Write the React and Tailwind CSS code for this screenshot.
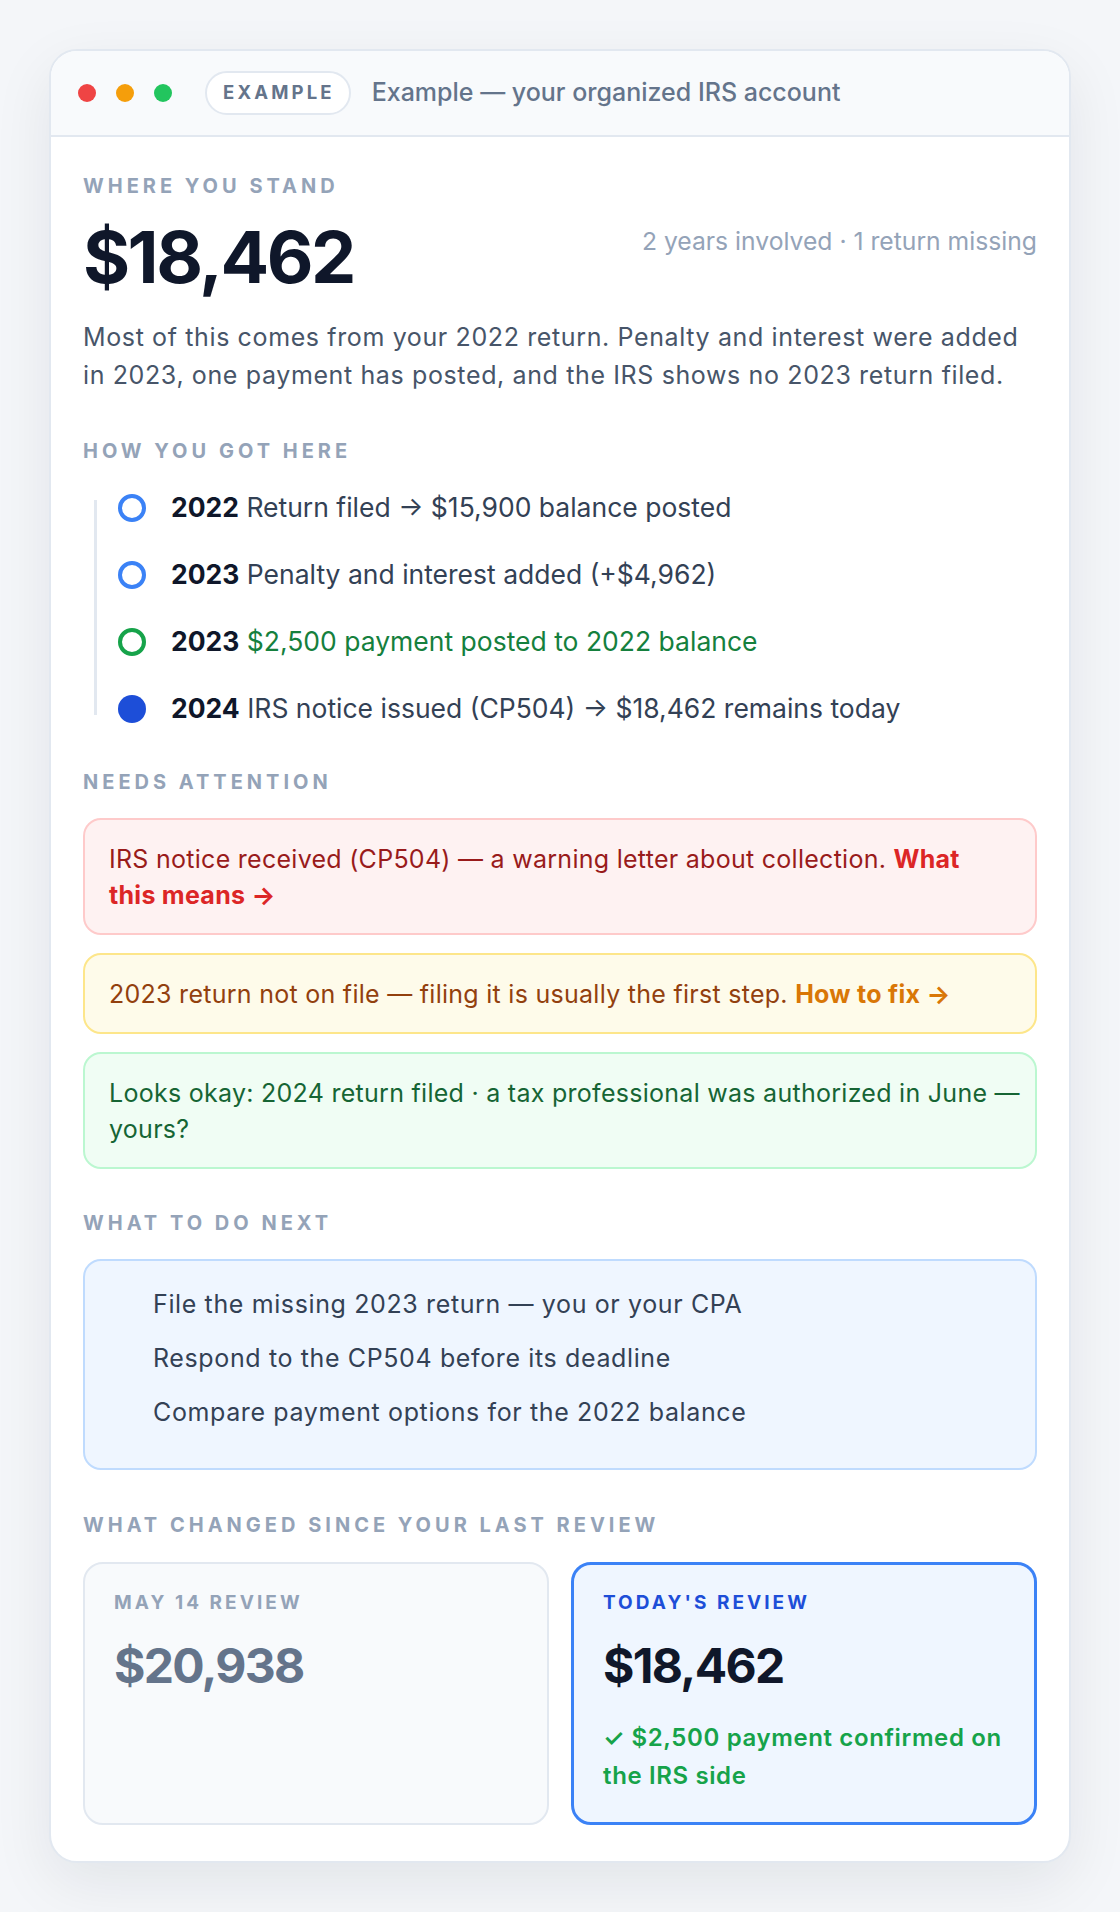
import React from "react";

const timeline = [
  { year: "2022", text: "Return filed → $15,900 balance posted", dot: "border-[4px] border-[#3b82f6]", tone: "text-[#334155]" },
  { year: "2023", text: "Penalty and interest added (+$4,962)", dot: "border-[4px] border-[#3b82f6]", tone: "text-[#334155]" },
  { year: "2023", text: "$2,500 payment posted to 2022 balance", dot: "border-[4px] border-[#16a34a]", tone: "text-[#15803d]" },
  { year: "2024", text: "IRS notice issued (CP504) → $18,462 remains today", dot: "bg-[#1d4ed8]", tone: "text-[#334155]" },
];

const nextSteps = [
  "File the missing 2023 return — you or your CPA",
  "Respond to the CP504 before its deadline",
  "Compare payment options for the 2022 balance",
];

// small uppercase section heading
function Label({ children, className = "" }) {
  return (
    <div className={`text-[20px] leading-[28px] font-bold uppercase tracking-[0.2em] text-[#94a3b8] ${className}`}>
      {children}
    </div>
  );
}

// label used inside the review cards
function CardLabel({ children, color }) {
  return (
    <div className={`text-[19px] leading-[28px] font-bold uppercase tracking-[0.16em] ${color}`}>
      {children}
    </div>
  );
}

export default function App() {
  return (
    <div
      className="min-h-screen bg-[#f4f6f9] px-[49px] pt-[49px] pb-[50px]"
      style={{ fontFamily: "Inter, 'Noto Sans', sans-serif" }}
    >
      <div className="rounded-[28px] border-2 border-[#e2e8f0] bg-white shadow-[0_20px_60px_rgba(15,23,42,0.08)] overflow-hidden">
        {/* window bar */}
        <div className="flex items-center h-[86px] px-[27px] bg-[#f8fafc] border-b-2 border-[#e2e8f0]">
          <div className="flex items-center gap-5">
            <span className="w-[18px] h-[18px] rounded-full bg-[#ef4444]" />
            <span className="w-[18px] h-[18px] rounded-full bg-[#f59e0b]" />
            <span className="w-[18px] h-[18px] rounded-full bg-[#22c55e]" />
          </div>
          <span className="ml-[33px] flex items-center h-[44px] pl-[16px] pr-[14px] rounded-full bg-white border-2 border-[#e2e8f0] text-[18.5px] font-bold tracking-[0.17em] text-[#64748b]">
            EXAMPLE
          </span>
          <span className="ml-[21px] text-[25px] font-medium text-[#64748b]">
            Example — your organized IRS account
          </span>
        </div>

        <div className="px-[32px] pt-[35px] pb-[36px]">
          {/* where you stand */}
          <div className="flex justify-between items-start">
            <div>
              <Label>Where you stand</Label>
              <div className="mt-[21px] text-[72px] leading-[72px] font-bold tracking-[-0.035em] text-[#0f172a]">$18,462</div>
            </div>
            <div className="mt-[53px] text-[24.7px] leading-[32px] text-[#94a3b8]">2 years involved · 1 return missing</div>
          </div>
          <p className="mt-[25px] text-[25px] leading-[38px] tracking-[0.025em] text-[#475569]">
            Most of this comes from your 2022 return. Penalty and interest were added in 2023, one payment has posted, and the IRS shows no 2023 return filed.
          </p>

          {/* timeline */}
          <Label className="mt-[43px]">How you got here</Label>
          <div className="relative mt-[23px]">
            <div className="absolute left-[11px] top-[12px] bottom-[14px] w-[3px] bg-[#e2e8f0]" />
            <div className="flex flex-col gap-[27px] pl-[35px]">
              {timeline.map((t, i) => (
                <div key={i} className="flex items-center h-[40px] gap-[25px]">
                  <span className={`w-[28px] h-[28px] rounded-full shrink-0 ${t.dot}`} />
                  <span className={`text-[26.5px] ${t.tone}`}>
                    <b className="font-bold text-[#0f172a]">{t.year}</b> {t.text}
                  </span>
                </div>
              ))}
            </div>
          </div>

          {/* needs attention */}
          <Label className="mt-[39px]">Needs attention</Label>
          <div className="mt-[22px] flex flex-col gap-[18px] text-[25px] leading-[36px] tracking-[0.011em]">
            <div className="rounded-[18px] border-2 border-[#fecaca] bg-[#fef2f2] px-[24px] pt-[21px] pb-[20px] text-[#991b1b]">
              IRS notice received (CP504) — a warning letter about collection.{" "}
              <span className="font-bold text-[#dc2626]">What this means →</span>
            </div>
            <div className="rounded-[18px] border-2 border-[#fde68a] bg-[#fefbea] px-[24px] pt-[21px] pb-[20px] text-[#92400e]">
              2023 return not on file — filing it is usually the first step.{" "}
              <span className="font-bold text-[#d97706]">How to fix →</span>
            </div>
            <div className="rounded-[18px] border-2 border-[#bbf7d0] bg-[#f0fdf4] pl-[24px] pr-[12px] pt-[21px] pb-[20px] text-[#166534]">
              Looks okay: 2024 return filed · a tax professional was authorized in June — yours?
            </div>
          </div>

          {/* next steps */}
          <Label className="mt-[40px]">What to do next</Label>
          <ul className="mt-[22px] rounded-[18px] border-2 border-[#bfdbfe] bg-[#eff6ff] pl-[68px] pr-6 pt-[25px] pb-[38px] flex flex-col gap-[18px]">
            {nextSteps.map((s) => (
              <li key={s} className="text-[25px] leading-[36px] tracking-[0.025em] text-[#334155]">{s}</li>
            ))}
          </ul>

          {/* review compare */}
          <Label className="mt-[41px]">What changed since your last review</Label>
          <div className="mt-[23px] grid grid-cols-2 gap-[22px]">
            <div className="h-[263px] rounded-[20px] border-2 border-[#e2e8f0] bg-[#f8fafc] px-[29px] pt-[25px]">
              <CardLabel color="text-[#94a3b8]">May 14 review</CardLabel>
              <div className="mt-[21px] text-[48px] leading-[56px] font-bold tracking-[-0.035em] text-[#64748b]">$20,938</div>
            </div>
            <div className="h-[263px] rounded-[20px] border-[3px] border-[#3b82f6] bg-[#eff6ff] px-[29px] pt-[24px]">
              <CardLabel color="text-[#1d4ed8]">Today's review</CardLabel>
              <div className="mt-[21px] text-[48px] leading-[56px] font-bold tracking-[-0.035em] text-[#0f172a]">$18,462</div>
              <div className="mt-[25px] text-[24px] leading-[38px] font-semibold tracking-[0.026em] text-[#16a34a]">
                ✓ $2,500 payment confirmed on the IRS side
              </div>
            </div>
          </div>
        </div>
      </div>
    </div>
  );
}
